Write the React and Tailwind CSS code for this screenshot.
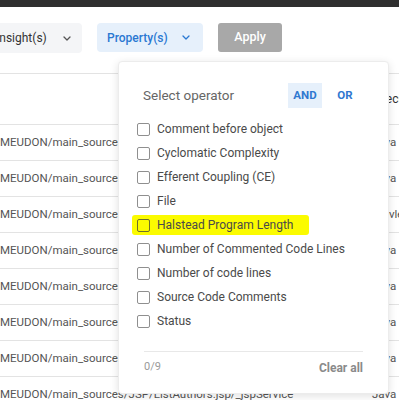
import React from 'react';

const rows = [
  ['MEUDON/main_sources/JSP/EditBook.jsp/_jspService', 'Java'],
  ['MEUDON/main_sources/JSP/ListBooks.jsp/_jspService', 'Java'],
  ['MEUDON/main_sources/Servlet/BookServlet/doGet', 'Servlet'],
  ['MEUDON/main_sources/JSP/Login.jsp/_jspService', 'Java'],
  ['MEUDON/main_sources/JSP/Logout.jsp/_jspService', 'Java'],
  ['MEUDON/main_sources/JSP/Search.jsp/_jspService', 'Java'],
  ['MEUDON/main_sources/JSP/AddAuthor.jsp/_jspService', 'Java'],
  ['MEUDON/main_sources/JSP/ListAuthors.jsp/_jspService', 'Java'],
];

const properties = [
  'Comment before object',
  'Cyclomatic Complexity',
  'Efferent Coupling (CE)',
  'File',
  'Halstead Program Length',
  'Number of Commented Code Lines',
  'Number of code lines',
  'Source Code Comments',
  'Status',
];

function Chevron({ color }) {
  return (
    <svg width="8" height="5" viewBox="0 0 8 5" fill="none">
      <path d="M1 1l3 3 3-3" stroke={color} strokeWidth="1.3" strokeLinecap="round" strokeLinejoin="round" />
    </svg>
  );
}

function Checkbox({ dark }) {
  return (
    <span
      className={`w-[13px] h-[13px] shrink-0 rounded-[2px] border ${dark ? 'border-[#6f6f2a]' : 'border-[#8f8f8f]'} bg-transparent`}
    />
  );
}

export default function App() {
  return (
    <div className="relative w-[399px] h-[400px] overflow-hidden bg-white font-['Roboto',sans-serif]">
      <div className="h-[7px] bg-[#2f2f2f]" />

      {/* toolbar */}
      <div className="flex items-start gap-[15px] -ml-[15px] mt-[16px] h-[30px]">
        <button className="flex items-center h-[30px] w-[97px] pl-[11px] bg-[#f4f5f7] rounded-[4px] text-[12px] text-[#333]">
          <span>Insight(s)</span>
          <span className="ml-[16px] flex"><Chevron color="#555" /></span>
        </button>
        <button className="flex items-center h-[29px] w-[106px] pl-[10px] bg-[#e6f0fb] rounded-[4px] text-[12px] font-medium text-[#2a78d2]">
          <span>Property(s)</span>
          <span className="ml-[14px] flex"><Chevron color="#2a78d2" /></span>
        </button>
        <button className="flex items-center justify-center h-[29px] w-[64px] bg-[#a8a8a8] rounded-[3px] text-[12.5px] font-medium text-white">
          Apply
        </button>
      </div>

      {/* table */}
      <div className="mt-[20px] border-t border-[#e3e3e3] w-[420px]">
        <div className="flex h-[51px] items-center border-b border-[#e3e3e3] text-[12px] text-[#333]">
          <div className="w-[372px] shrink-0" />
          <div className="whitespace-nowrap">Specific type</div>
        </div>
        {rows.map(([path, type], i) => (
          <div key={i} className="flex h-[36px] items-center border-b border-[#e3e3e3] text-[11.5px] text-[#555]">
            <div className="w-[372px] shrink-0 whitespace-nowrap overflow-hidden">{path}</div>
            <div className="whitespace-nowrap">{type}</div>
          </div>
        ))}
      </div>

      {/* popup */}
      <div className="absolute left-[118px] top-[61px] w-[271px] h-[333px] bg-white rounded-[4px] border border-[#ececec] shadow-[0_2px_8px_rgba(0,0,0,0.12)]">
        <div className="flex items-center h-[25px] mt-[21px] pl-[24px] pr-[26px]">
          <span className="flex-1 text-[13.5px] text-[#666]">Select operator</span>
          <span className="flex items-center justify-center w-[34px] h-[25px] bg-[#e6f0fb] text-[11.5px] font-bold text-[#2f78d0]">AND</span>
          <span className="flex items-center justify-center w-[34px] h-[25px] ml-[6px] text-[11.5px] font-bold text-[#2f78d0]">OR</span>
        </div>
        <div className="mt-[9px] flex flex-col">
          {properties.map((p) => {
            const hl = p === 'Halstead Program Length';
            return (
              <div key={p} className="h-[24px] flex items-center pl-[13px]">
                <div
                  className={`flex items-center gap-[7px] h-[20px] pl-[5px] pr-[16px] rounded-[3px] text-[12px] text-[#4a4a4a] ${hl ? 'bg-[#fbfb00]' : ''}`}
                >
                  <Checkbox dark={hl} />
                  <span className="whitespace-nowrap">{p}</span>
                </div>
              </div>
            );
          })}
        </div>
        <div className="mx-[25px] mt-[18px] border-t border-[#e8e8e8] h-[32px] flex items-center justify-between">
          <span className="text-[11px] text-[#9a9a9a]">0/9</span>
          <span className="text-[12px] font-bold text-[#8a8a8a]">Clear all</span>
        </div>
      </div>
    </div>
  );
}
